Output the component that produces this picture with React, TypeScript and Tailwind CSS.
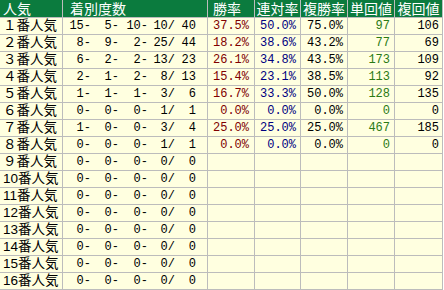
const NUM = "font-['Liberation_Mono','DejaVu_Sans_Mono',monospace] text-[12px] leading-none";
const JP = "font-['Liberation_Sans','Noto_Sans_CJK_JP',sans-serif]";

type Row = {
  label: string;
  counts: number[];
  rates?: [string, string, string, string, string];
};

const rows: Row[] = [
  { label: '１番人気', counts: [15, 5, 10, 10, 40], rates: ['37.5%', '50.0%', '75.0%', '97', '106'] },
  { label: '２番人気', counts: [8, 9, 2, 25, 44], rates: ['18.2%', '38.6%', '43.2%', '77', '69'] },
  { label: '３番人気', counts: [6, 2, 2, 13, 23], rates: ['26.1%', '34.8%', '43.5%', '173', '109'] },
  { label: '４番人気', counts: [2, 1, 2, 8, 13], rates: ['15.4%', '23.1%', '38.5%', '113', '92'] },
  { label: '５番人気', counts: [1, 1, 1, 3, 6], rates: ['16.7%', '33.3%', '50.0%', '128', '135'] },
  { label: '６番人気', counts: [0, 0, 0, 1, 1], rates: ['0.0%', '0.0%', '0.0%', '0', '0'] },
  { label: '７番人気', counts: [1, 0, 0, 3, 4], rates: ['25.0%', '25.0%', '25.0%', '467', '185'] },
  { label: '８番人気', counts: [0, 0, 0, 1, 1], rates: ['0.0%', '0.0%', '0.0%', '0', '0'] },
  { label: '９番人気', counts: [0, 0, 0, 0, 0] },
  { label: '10番人気', counts: [0, 0, 0, 0, 0] },
  { label: '11番人気', counts: [0, 0, 0, 0, 0] },
  { label: '12番人気', counts: [0, 0, 0, 0, 0] },
  { label: '13番人気', counts: [0, 0, 0, 0, 0] },
  { label: '14番人気', counts: [0, 0, 0, 0, 0] },
  { label: '15番人気', counts: [0, 0, 0, 0, 0] },
  { label: '16番人気', counts: [0, 0, 0, 0, 0] },
];

const rateColors = ['text-[#800000]', 'text-[#000080]', 'text-black', 'text-[#2a7a14]', 'text-black'];
const ratePad = ['pr-[5px]', 'pr-[4px]', 'pr-[4px]', 'pr-[4px]', 'pr-[3px]'];
const countWidths = ['w-[28px]', 'w-[28px]', 'w-[29px]', 'w-[27px]', 'w-[21px]'];

function Counts({ counts }: { counts: number[] }) {
  return (
    <div className={`flex items-center overflow-hidden bg-[#ffffe0] ${NUM}`}>
      {counts.map((c, i) => (
        <span key={i} className={`${countWidths[i]} text-right whitespace-pre`}>
          {c}
          {i < 3 ? '-' : i === 3 ? '/' : ''}
        </span>
      ))}
    </div>
  );
}

export default function App() {
  return (
    <div className="w-[444px] h-[290px] bg-white">
      <div className="w-[443px] grid grid-cols-[62px_144px_46px_45px_46px_46px_47px] grid-rows-[17px_repeat(16,16px)] gap-px bg-[#bcbcbc] pb-px pr-px">
        {/* header */}
        <div className={`bg-[#0b7b3e] text-white text-[14px] leading-none flex items-center pl-[3px] ${JP}`}>人気</div>
        <div className={`bg-[#0b7b3e] text-white text-[14px] leading-none flex items-center pl-[7px] ${JP}`}>着別度数</div>
        <div className={`bg-[#0b7b3e] text-white text-[14px] leading-none flex items-center pl-[5px] ${JP}`}>勝率</div>
        {['連対率', '複勝率', '単回値', '複回値'].map((h) => (
          <div key={h} className={`bg-[#0b7b3e] text-white text-[14px] leading-none flex items-center justify-center ${JP}`}>
            {h}
          </div>
        ))}

        {rows.map((r) => (
          <div key={r.label} className="contents">
            <div className={`bg-[#ffffe0] text-black text-[13.5px] leading-none flex items-center pl-[3px] whitespace-nowrap ${JP}`}>
              {r.label}
            </div>
            <Counts counts={r.counts} />
            {[0, 1, 2, 3, 4].map((i) => (
              <div
                key={i}
                className={`bg-[#ffffe0] flex items-center justify-end ${ratePad[i]} ${rateColors[i]} ${NUM}`}
              >
                {r.rates ? r.rates[i] : ''}
              </div>
            ))}
          </div>
        ))}
      </div>
    </div>
  );
}
